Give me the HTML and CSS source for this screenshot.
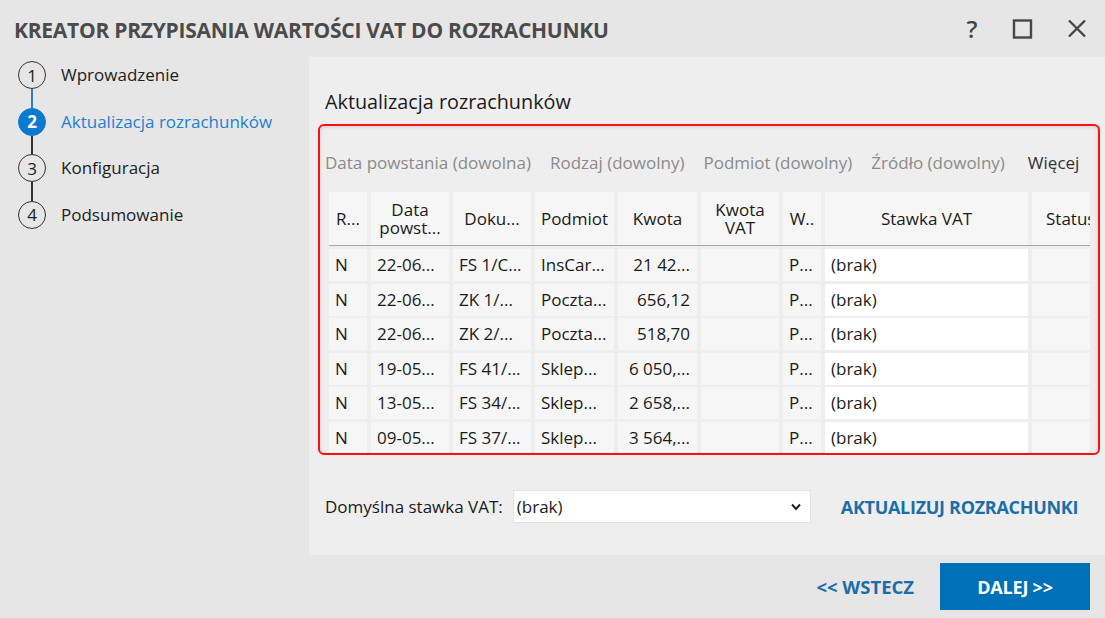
FILE: index.html
```html
<!DOCTYPE html>
<html lang="pl">
<head>
<meta charset="utf-8">
<title>Kreator przypisania wartości VAT do rozrachunku</title>
<link rel="stylesheet" href="styles.css">
</head>
<body>
<div class="window">
  <header class="titlebar">
    <h1 class="title">KREATOR PRZYPISANIA WARTOŚCI VAT DO ROZRACHUNKU</h1>
    <div class="win-controls">
      <span class="ctl help">?</span>
      <span class="ctl"><svg width="22" height="20" viewBox="0 0 22 20"><rect x="2" y="1.5" width="17" height="17" fill="none" stroke="#464646" stroke-width="2.4"/></svg></span>
      <span class="ctl"><svg width="22" height="20" viewBox="0 0 22 20"><path d="M3 1.5 L19 17.5 M19 1.5 L3 17.5" stroke="#464646" stroke-width="2.4" fill="none"/></svg></span>
    </div>
  </header>

  <div class="main">
    <nav class="sidebar">
      <div class="step done">
        <div class="indicator"><span class="circle">1</span><span class="link blue"></span></div>
        <span class="label">Wprowadzenie</span>
      </div>
      <div class="step active">
        <div class="indicator"><span class="circle">2</span><span class="link"></span></div>
        <span class="label">Aktualizacja rozrachunków</span>
      </div>
      <div class="step">
        <div class="indicator"><span class="circle">3</span><span class="link"></span></div>
        <span class="label">Konfiguracja</span>
      </div>
      <div class="step last">
        <div class="indicator"><span class="circle">4</span></div>
        <span class="label">Podsumowanie</span>
      </div>
    </nav>

    <section class="panel">
      <h2 class="heading">Aktualizacja rozrachunków</h2>
      <div class="highlight">
        <div class="filters">
          <span>Data powstania (dowolna)</span>
          <span>Rodzaj (dowolny)</span>
          <span>Podmiot (dowolny)</span>
          <span>Źródło (dowolny)</span>
          <span class="more">Więcej</span>
        </div>
        <div class="grid-wrap">
          <div class="grid head">
            <div class="hc">R...</div>
            <div class="hc two"><span>Data</span><span>powst...</span></div>
            <div class="hc">Doku...</div>
            <div class="hc">Podmiot</div>
            <div class="hc">Kwota</div>
            <div class="hc two"><span>Kwota</span><span>VAT</span></div>
            <div class="hc">W..</div>
            <div class="hc">Stawka VAT</div>
            <div class="hc left">Status</div>
          </div>
          <div class="rows">
            <div class="grid row"><div class="c">N</div><div class="c">22-06...</div><div class="c">FS 1/C...</div><div class="c">InsCar...</div><div class="c num">21 42...</div><div class="c"></div><div class="c">P...</div><div class="c vat">(brak)</div><div class="c"></div></div>
            <div class="grid row"><div class="c">N</div><div class="c">22-06...</div><div class="c">ZK 1/...</div><div class="c">Poczta...</div><div class="c num">656,12</div><div class="c"></div><div class="c">P...</div><div class="c vat">(brak)</div><div class="c"></div></div>
            <div class="grid row"><div class="c">N</div><div class="c">22-06...</div><div class="c">ZK 2/...</div><div class="c">Poczta...</div><div class="c num">518,70</div><div class="c"></div><div class="c">P...</div><div class="c vat">(brak)</div><div class="c"></div></div>
            <div class="grid row"><div class="c">N</div><div class="c">19-05...</div><div class="c">FS 41/...</div><div class="c">Sklep...</div><div class="c num">6 050,...</div><div class="c"></div><div class="c">P...</div><div class="c vat">(brak)</div><div class="c"></div></div>
            <div class="grid row"><div class="c">N</div><div class="c">13-05...</div><div class="c">FS 34/...</div><div class="c">Sklep...</div><div class="c num">2 658,...</div><div class="c"></div><div class="c">P...</div><div class="c vat">(brak)</div><div class="c"></div></div>
            <div class="grid row"><div class="c">N</div><div class="c">09-05...</div><div class="c">FS 37/...</div><div class="c">Sklep...</div><div class="c num">3 564,...</div><div class="c"></div><div class="c">P...</div><div class="c vat">(brak)</div><div class="c"></div></div>
          </div>
        </div>
      </div>

      <div class="defaults">
        <span class="def-label">Domyślna stawka VAT:</span>
        <div class="select">
          <span>(brak)</span>
          <svg width="12" height="8" viewBox="0 0 12 8"><path d="M2 1.5 L6 6 L10 1.5" fill="none" stroke="#222" stroke-width="2"/></svg>
        </div>
        <span class="link-btn">AKTUALIZUJ ROZRACHUNKI</span>
      </div>
    </section>
  </div>

  <footer class="footer">
    <span class="back">&lt;&lt; WSTECZ</span>
    <span class="next">DALEJ &gt;&gt;</span>
  </footer>
</div>
</body>
</html>
```
FILE: styles.css
```css
* { box-sizing: border-box; }
html, body {
  margin: 0;
  padding: 0;
}
body {
  width: 1105px;
  height: 618px;
  overflow: hidden;
  background: #e6e6e6;
  font-family: "Open Sans", "Noto Sans", sans-serif;
  color: #1b1b1b;
}
.window {
  display: flex;
  flex-direction: column;
  height: 618px;
}
.titlebar {
  height: 57px;
  display: flex;
  align-items: center;
  justify-content: space-between;
  padding: 0 11px 0 14px;
}
.title {
  margin: 0;
  font-size: 21px;
  font-weight: 700;
  color: #4b4b4b;
  letter-spacing: -0.25px;
  padding-top: 2px;
  white-space: nowrap;
}
.win-controls {
  display: flex;
  align-items: center;
  gap: 20px;
}
.ctl {
  display: flex;
  align-items: center;
  justify-content: center;
  width: 34px;
  height: 30px;
}
.ctl.help {
  font-size: 24px;
  font-weight: 600;
  color: #464646;
  margin-right: -3px;
}
.main {
  display: flex;
  height: 498px;
}
.sidebar {
  width: 309px;
  padding: 4px 0 0 18px;
}
.step {
  display: flex;
  align-items: flex-start;
  height: 46.5px;
}
.step.last { height: 28px; }
.indicator {
  width: 28px;
  display: flex;
  flex-direction: column;
  align-items: center;
}
.circle {
  width: 28px;
  height: 28px;
  border: 1.5px solid #333;
  border-radius: 50%;
  display: flex;
  align-items: center;
  justify-content: center;
  font-size: 17px;
  color: #222;
  background: #e6e6e6;
}
.link {
  width: 1.5px;
  height: 18.5px;
  background: #333;
}
.link.blue { background: #2f7cc0; }
.step.active .circle {
  background: #0a7ad1;
  border-color: #0a7ad1;
  color: #fff;
  font-weight: 700;
}
.label {
  margin-left: 15px;
  line-height: 28px;
  font-size: 17px;
  color: #222;
  white-space: nowrap;
}
.step.active .label { color: #1f80d2; }

.panel {
  flex: 1;
  background: #eeeeee;
  padding: 33px 5px 0 9px;
}
.heading {
  margin: 0 0 10px 7px;
  font-size: 19.8px;
  font-weight: 400;
  line-height: 24px;
  color: #1b1b1b;
}
.highlight {
  height: 331px;
  border: 2px solid #ff1010;
  border-radius: 6px;
  padding: 22px 8px 0 9px;
  box-shadow: inset 0 1px 4px rgba(0,0,0,0.12);
  overflow: hidden;
}
.filters {
  display: flex;
  gap: 19px;
  margin-left: -4px;
  font-size: 17px;
  color: #8b8b8b;
  height: 30px;
  line-height: 30px;
  white-space: nowrap;
}
.filters .more { color: #333; margin-left: 4px; }
.grid-wrap {
  margin-top: 14px;
  width: 761px;
  overflow: hidden;
}
.grid {
  display: grid;
  grid-template-columns: 38px 78px 78px 79px 79px 78px 38px 203px 80px;
  column-gap: 4px;
  font-size: 17px;
}
.head {
  border-bottom: 1.5px solid #a9a9a9;
  height: 54px;
}
.hc {
  background: #f6f6f6;
  display: flex;
  align-items: center;
  justify-content: center;
  text-align: center;
  line-height: 20px;
  white-space: nowrap;
  overflow: hidden;
  color: #1b1b1b;
}
.hc.two {
  flex-direction: column;
  line-height: 17px;
}
.hc.two span { display: block; height: 18px; }
.hc.left { justify-content: flex-start; padding-left: 14px; }
.rows {
  padding-top: 3px;
  display: flex;
  flex-direction: column;
  gap: 2.6px;
}
.row { height: 32px; }
.c {
  background: #f6f6f6;
  line-height: 32px;
  padding: 0 6px;
  white-space: nowrap;
  overflow: hidden;
}
.c.num { text-align: right; padding-right: 7px; }
.c.vat { background: #ffffff; }

.defaults {
  display: flex;
  align-items: center;
  margin-top: 35px;
  padding-left: 7px;
}
.def-label {
  font-size: 17px;
  color: #1b1b1b;
  white-space: nowrap;
}
.select {
  margin-left: 10px;
  width: 298px;
  height: 33px;
  background: #fff;
  border: 1px solid #e2e2e2;
  display: flex;
  align-items: center;
  justify-content: space-between;
  padding: 0 8px 0 3px;
  font-size: 17px;
  flex: none;
}
.link-btn {
  margin-left: 30px;
  font-size: 18px;
  font-weight: 700;
  color: #1b6ea9;
  letter-spacing: -0.3px;
  white-space: nowrap;
}
.footer {
  flex: 1;
  display: flex;
  align-items: center;
  justify-content: flex-end;
  padding: 0 15px 0 0;
}
.back {
  font-size: 18.5px;
  font-weight: 700;
  color: #1b6ea9;
  letter-spacing: 0;
  margin-right: 26px;
}
.next {
  width: 150px;
  height: 47px;
  background: #0070b8;
  color: #fff;
  font-size: 18px;
  font-weight: 700;
  letter-spacing: -0.2px;
  display: flex;
  align-items: center;
  justify-content: center;
}
```
